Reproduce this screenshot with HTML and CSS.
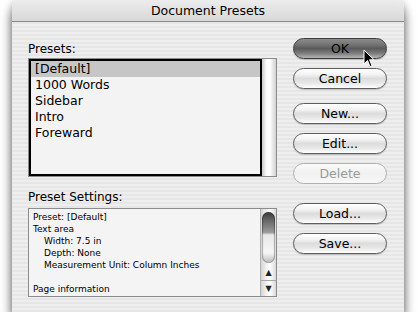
FILE: index.html
```html
<!DOCTYPE html>
<html lang="en">
<head>
    <meta charset="UTF-8">
    <title>Document Presets</title>
    <link rel="stylesheet" href="styles.css">
</head>
<body>
    <div class="window">
        <div class="titlebar">Document Presets</div>

        <div class="content">
            <div class="left-col">
                <div class="label">Presets:</div>
                <div class="listbox">
                    <ul class="list">
                        <li class="selected">[Default]</li>
                        <li>1000 Words</li>
                        <li>Sidebar</li>
                        <li>Intro</li>
                        <li>Foreward</li>
                    </ul>
                    <div class="list-track"></div>
                </div>

                <div class="label settings-label">Preset Settings:</div>
                <div class="settings">
                    <div class="settings-text">
                        <div>Preset: [Default]</div>
                        <div>Text area</div>
                        <div class="indent">Width: 7.5 in</div>
                        <div class="indent">Depth: None</div>
                        <div class="indent">Measurement Unit: Column Inches</div>
                        <div>&nbsp;</div>
                        <div>Page information</div>
                    </div>
                    <div class="scrollbar">
                        <div class="thumb"></div>
                        <div class="arrow arrow-up">&#9650;</div>
                        <div class="arrow arrow-down">&#9660;</div>
                    </div>
                </div>
            </div>

            <div class="buttons">
                <button class="btn btn-default">OK</button>
                <button class="btn">Cancel</button>
                <button class="btn group-start">New...</button>
                <button class="btn">Edit...</button>
                <button class="btn" disabled>Delete</button>
                <button class="btn group-big">Load...</button>
                <button class="btn">Save...</button>
            </div>
        </div>

        <!-- mouse pointer resting on OK -->
        <svg class="cursor" width="12" height="19" viewBox="0 0 12 19">
            <path d="M1 1 L1 15 L4.5 11.5 L7 17.5 L9 16.6 L6.6 10.8 L11 10.8 Z" fill="#000" stroke="#fff" stroke-width="1"/>
        </svg>
    </div>
</body>
</html>
```

FILE: styles.css
```css
body {
    margin: 0;
    background: #fff;
    font-family: "DejaVu Sans", Verdana, sans-serif;
    color: #000;
}
.window {
    position: relative;
    margin-left: 12px;
    width: 392px;
    height: 312px;
    border-radius: 6px 6px 0 0;
    background: repeating-linear-gradient(to bottom, #eeeeee 0, #eeeeee 2px, #e6e6e6 2px, #e6e6e6 4px);
    box-shadow: 0 9px 12px rgba(0,0,0,0.6), 0 0 7px rgba(0,0,0,0.2);
}
.titlebar {
    height: 21px;
    line-height: 22px;
    text-align: center;
    font-size: 12.5px;
    border-radius: 6px 6px 0 0;
    border-bottom: 1px solid #8a8a8a;
    background: linear-gradient(to bottom, #ececec 0%, #d8d8d8 100%);
}
.content {
    display: flex;
    gap: 16px;
    padding: 16px 0 0 16px;
}
.left-col {
    width: 249px;
    padding-top: 4px;
}
.label {
    font-size: 12px;
    line-height: 14px;
    margin-bottom: 2px;
}
.settings-label {
    margin-top: 13px;
    margin-bottom: 4px;
}
.listbox {
    display: flex;
    height: 117px;
    border: 1px solid #8c8c8c;
    background: #fff;
}
.list {
    flex: 1;
    margin: 0;
    padding: 0;
    list-style: none;
    border: 2px solid #000;
    background: #f3f3f3;
}
.list li {
    height: 16px;
    line-height: 16px;
    padding-left: 4px;
    font-size: 12.5px;
}
.list li.selected {
    background: #c6c6c6;
}
.list-track {
    width: 14px;
    background: linear-gradient(to right, #c8c8c8 0%, #fafafa 30%, #ffffff 55%, #d0d0d0 100%);
}
.settings {
    display: flex;
    height: 87px;
    border: 1px solid #8c8c8c;
    background: #f4f4f4;
}
.settings-text {
    flex: 1;
    padding: 2px 0 0 4px;
    font-size: 9px;
    line-height: 12px;
    white-space: nowrap;
    overflow: hidden;
}
.settings-text .indent {
    padding-left: 11px;
}
.scrollbar {
    width: 15px;
    display: flex;
    flex-direction: column;
    border-left: 1px solid #b0b0b0;
    background: linear-gradient(to right, #d4d4d4 0%, #f6f6f6 40%, #ffffff 60%, #d8d8d8 100%);
}
.thumb {
    height: 51px;
    margin: 3px 1px 0 1px;
    border-radius: 7px;
    background: linear-gradient(to bottom, #3a3a3a 0%, #6a6a6a 18%, #9a9a9a 40%, #e8e8e8 45%, #f6f6f6 80%, #b8b8b8 100%);
    box-shadow: inset 1px 0 1px rgba(0,0,0,0.3), inset -1px 0 1px rgba(0,0,0,0.3);
}
.arrow {
    height: 15px;
    line-height: 15px;
    text-align: center;
    font-size: 8px;
    color: #222;
}
.arrow-up {
    margin-top: auto;
    border-bottom: 1px solid #a8a8a8;
}
.buttons {
    display: flex;
    flex-direction: column;
    gap: 9px;
}
.btn {
    width: 94px;
    height: 21px;
    padding: 0;
    border: 1px solid #5e5e5e;
    border-radius: 11px;
    font-family: "DejaVu Sans", Verdana, sans-serif;
    font-size: 12.5px;
    color: #000;
    background: linear-gradient(to bottom, #ffffff 0%, #f2f2f2 30%, #dcdcdc 50%, #e8e8e8 75%, #ffffff 100%);
    box-shadow: 0 1px 1px rgba(0,0,0,0.2);
}
.btn-default {
    background: linear-gradient(to bottom, #8c8c8c 0%, #6e6e6e 35%, #5a5a5a 50%, #7c7c7c 75%, #b4b4b4 100%);
    border-color: #3c3c3c;
}
.btn:disabled {
    color: #9a9a9a;
    border-color: #b0b0b0;
    background: linear-gradient(to bottom, #fbfbfb 0%, #f0f0f0 50%, #f8f8f8 100%);
    box-shadow: none;
}
.group-start {
    margin-top: 5px;
}
.group-big {
    margin-top: 10px;
}
.cursor {
    position: absolute;
    left: 351px;
    top: 49px;
}
```
